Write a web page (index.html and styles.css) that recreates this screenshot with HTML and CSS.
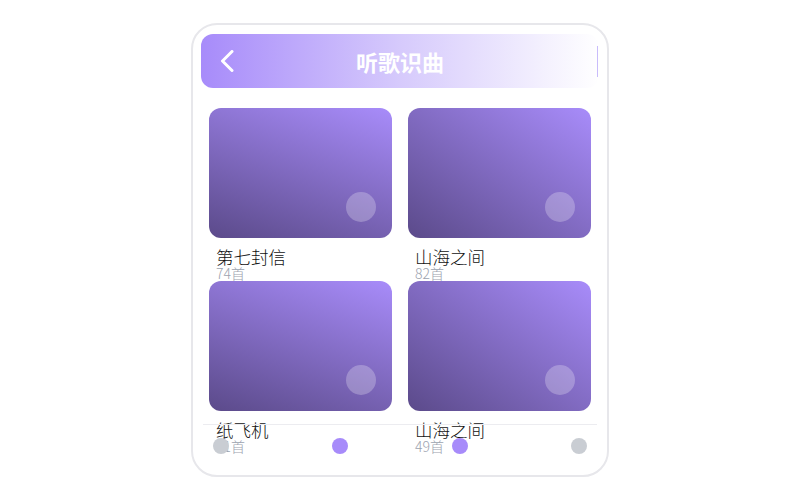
FILE: index.html
```html
<!DOCTYPE html>
<html lang="zh">
<head>
<meta charset="utf-8">
<title>听歌识曲</title>
<link rel="stylesheet" href="styles.css">
</head>
<body>
<div class="phone">
  <div class="screen">
    <header class="header">
      <div class="header-left">
        <svg class="back" width="16" height="22" viewBox="0 0 16 22"><path d="M12 1.5 L2.5 11 L12 20.5" fill="none" stroke="#fff" stroke-width="3" stroke-linecap="round" stroke-linejoin="round"/></svg>
      </div>
      <h1 class="title">听歌识曲</h1>
      <div class="header-right"><span class="rule"></span></div>
    </header>
    <div class="grid">
      <div class="item">
        <div class="cover cover-a"><span class="play"></span></div>
        <div class="name">第七封信</div>
        <div class="count">74首</div>
      </div>
      <div class="item">
        <div class="cover cover-b"><span class="play"></span></div>
        <div class="name">山海之间</div>
        <div class="count">82首</div>
      </div>
      <div class="item">
        <div class="cover cover-a"><span class="play"></span></div>
        <div class="name">纸飞机</div>
        <div class="count">31首</div>
      </div>
      <div class="item">
        <div class="cover cover-b"><span class="play"></span></div>
        <div class="name">山海之间</div>
        <div class="count">49首</div>
      </div>
    </div>
    <nav class="tabbar">
      <span class="dot dot-off"></span>
      <span class="dot dot-on"></span>
      <span class="dot dot-on"></span>
      <span class="dot dot-off"></span>
    </nav>
  </div>
</div>
</body>
</html>
```
FILE: styles.css
```css
* { box-sizing: border-box; }
html, body { margin: 0; padding: 0; background: #fff; }
body {
  height: 500px;
  display: flex;
  align-items: center;
  justify-content: center;
  font-family: "Noto Sans CJK SC", "Noto Sans", sans-serif;
}
.phone {
  width: 418px;
  height: 454px;
  border: 2px solid #e7e7eb;
  border-radius: 26px;
  padding: 9px 8px 8px;
  background: #fff;
}
.screen {
  position: relative;
  height: 100%;
}
.header {
  height: 54px;
  border-radius: 12px;
  background: linear-gradient(to right, #a78bfa 0%, #d6cafc 50%, #ffffff 100%);
  display: grid;
  grid-template-columns: 60px 1fr 60px;
  align-items: center;
}
.header-left { display: flex; align-items: center; padding-left: 19px; }
.back { display: block; }
.title {
  margin: 0;
  text-align: center;
  color: #fff;
  font-size: 22px;
  font-weight: 700;
  line-height: 54px;
}
.header-right { display: flex; justify-content: flex-end; align-items: center; padding-right: 1px; }
.rule { width: 1px; height: 31px; background: #c9bcfb; }
.grid {
  margin: 20px 8px 0;
  display: grid;
  grid-template-columns: 1fr 1fr;
  column-gap: 16px;
}
.cover {
  position: relative;
  height: 130px;
  border-radius: 12px;
}
.cover-a { background: linear-gradient(200deg, #a88cfa 0%, #5b4a8a 100%); }
.cover-b { background: linear-gradient(to bottom left, #a88cfa 0%, #5b4a8a 100%); }
.play {
  position: absolute;
  right: 16px;
  bottom: 16px;
  width: 30px;
  height: 30px;
  border-radius: 50%;
  background: rgba(255, 255, 255, 0.25);
}
.name {
  margin-top: 10px;
  padding-left: 7px;
  font-size: 17.5px;
  font-weight: 300;
  line-height: 18px;
  color: #111;
}
.count {
  padding-left: 7px;
  font-size: 14px;
  font-weight: 300;
  line-height: 15px;
  color: #9ca3af;
}
.tabbar {
  position: absolute;
  left: 2px;
  right: 2px;
  bottom: 0;
  height: 43px;
  border-top: 1px solid #ececf0;
  display: flex;
  justify-content: space-between;
  align-items: center;
  padding: 0 10px;
}
.dot { width: 16px; height: 16px; border-radius: 50%; }
.dot-off { background: #c9cdd3; }
.dot-on { background: #a78bfa; }
```
